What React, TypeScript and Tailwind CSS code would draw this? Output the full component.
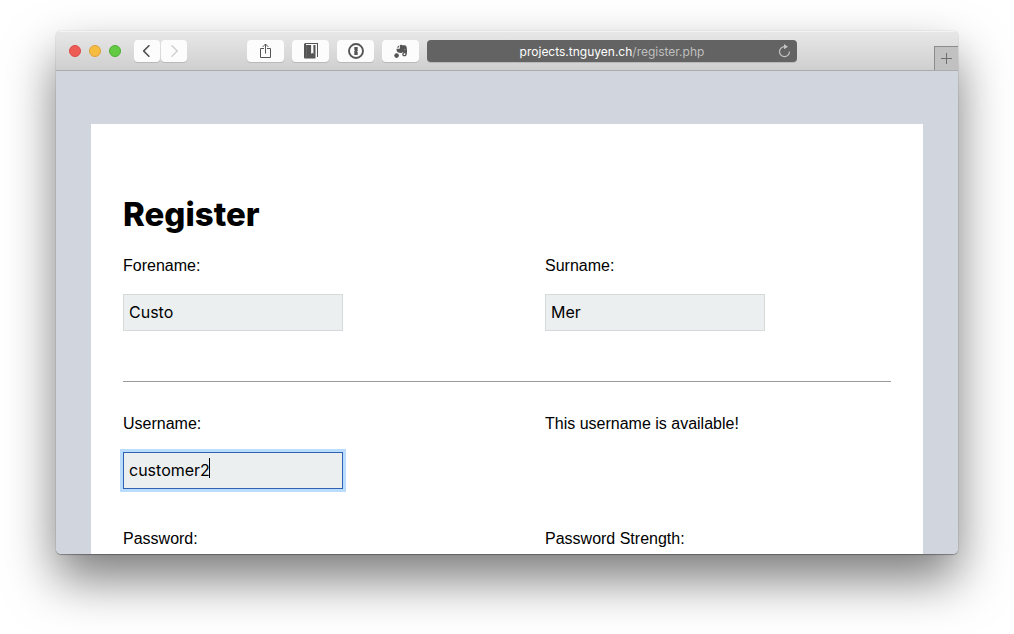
import type { ReactNode } from "react";

const fieldClass =
  "mt-4 block h-[37px] w-[220px] max-w-full border px-[5px] pb-0.5 font-['Inter',sans-serif] text-base text-black outline-none bg-[#ebeff0]";

function Field({ id, label, value }: { id: string; label: string; value: string }) {
  return (
    <div>
      <label htmlFor={id} className="block">
        {label}
      </label>
      <input id={id} type="text" defaultValue={value} className={`${fieldClass} border-[#d5d9d9]`} />
    </div>
  );
}

function ToolButton({ label, children }: { label: string; children: ReactNode }) {
  return (
    <button
      type="button"
      aria-label={label}
      className="flex h-[22px] w-[37px] items-center justify-center rounded bg-[#fcfcfc] text-[#555] shadow-[0_1px_0_#b9b9b9]"
    >
      {children}
    </button>
  );
}

function Toolbar() {
  return (
    <header className="flex h-10 shrink-0 items-start border-b border-[#acacac] bg-linear-to-b from-[#e8e8e8] to-[#cfcfcf] pl-[13px] pt-[9px] shadow-[inset_0_1px_0_#f4f4f4]">
      <div className="flex h-[22px] items-center gap-2">
        <button type="button" aria-label="Close" className="size-3 rounded-full border border-[#dd4a45] bg-[#ee5c56]" />
        <button type="button" aria-label="Minimize" className="size-3 rounded-full border border-[#dfa037] bg-[#f6bd41]" />
        <button type="button" aria-label="Zoom" className="size-3 rounded-full border border-[#4eae33] bg-[#62ca43]" />
      </div>

      <nav className="ml-[13px] flex gap-px">
        <button
          type="button"
          aria-label="Back"
          className="flex h-[22px] w-[26px] items-center justify-center rounded bg-[#fcfcfc] shadow-[0_1px_0_#b9b9b9]"
        >
          <svg width="8" height="12" viewBox="0 0 8 12" fill="none" stroke="#505050" strokeWidth="1.6">
            <path d="M6.400 0.300 0.700 6l5.700 5.700" />
          </svg>
        </button>
        <button
          type="button"
          aria-label="Forward"
          className="flex h-[22px] w-[26px] items-center justify-center rounded bg-[#fcfcfc] shadow-[0_1px_0_#b9b9b9]"
        >
          <svg width="8" height="12" viewBox="0 0 8 12" fill="none" stroke="#cfcfcf" strokeWidth="1.4">
            <path d="M1.500.3 7.200 6l-5.700 5.700" />
          </svg>
        </button>
      </nav>

      <div className="ml-[60px] flex gap-2">
        <ToolButton label="Share">
          <svg width="12" height="16" viewBox="0 0 12 16" fill="none" stroke="currentColor">
            <path d="M4 5.500H.5v9h10v-9H7M5.500 10.500V1M2.700 3.900l2.800-2.900 2.800 2.900" />
          </svg>
        </ToolButton>
        <ToolButton label="Reading list">
          <svg width="14" height="16" viewBox="0 0 14 16" fill="currentColor">
            <path d="M1.500 0H14v14h-1V1H2v1h9.500v13.500H1A1 1 0 0 1 0 14.500V1.500Q0 0 1.500 0Z" />
            <path d="M7.100 2h2.300v9L8.250 9.800 7.100 11Z" fill="#fcfcfc" />
            <path d="M2.500 2v13.500" stroke="#777" strokeWidth=".5" />
          </svg>
        </ToolButton>
        <ToolButton label="Password manager">
          <svg width="16" height="16" viewBox="0 0 16 16" fill="currentColor">
            <circle cx="8" cy="8" r="7" fill="none" stroke="currentColor" strokeWidth="1.9" />
            <path d="M6.300 3.900h3.400v4L9 8.600l.7.700v2.800H6.300v-4l.7-.7-.7-.7Z" />
          </svg>
        </ToolButton>
        <ToolButton label="Web clipper">
          <svg width="14" height="14" viewBox="0 0 14 14" fill="currentColor">
            <circle cx="2.600" cy="11.600" r="2.300" />
            <path d="M5.200 1.200v2.300H2.700Z" />
            <path d="M6 1.200c1.200-.8 2.400-.5 2.900.2 1.200-.1 2.700 0 3.200.6.900 1.300 1.100 4.700.8 7.400-.2 2-1 2.800-2.500 2.800-1.500 0-2.200-.7-2.200-1.800 0-1.300.8-1.900 2.200-1.700v1.100c-.7-.1-1 .2-.9.700.1.500.6.600 1.200.5.700-.2.800-1.100.6-1.800-1-.1-1.900-.4-2.300-1.100-.5.800-1.300 1-2.200.9-1.800-.1-3-.4-3.600-1.200-.5-.9-.8-2-.7-3.100h2.700c.6 0 .8-.3.800-.9Z" />
            <path d="M10.100 5.800c.2-.8 1.300-.8 1.500.3-.5-.2-1-.3-1.500-.3Z" fill="#fcfcfc" />
          </svg>
        </ToolButton>
      </div>

      <div className="ml-2 mr-[137px] flex h-[22px] min-w-0 flex-1 items-center rounded bg-[#636363] pl-[19px] pr-[6px] shadow-[0_1px_0_#b9b9b9]">
        <p className="flex-1 truncate pt-px text-center font-['Inter',sans-serif] text-[12px] leading-5 text-white">
          projects.tnguyen.ch<span className="text-[#bfbfbf]">/register.php</span>
        </p>
        <button type="button" aria-label="Reload" className="shrink-0 text-[#c4c4c4]">
          <svg width="13" height="14" viewBox="0 0 13 14" fill="none" stroke="currentColor" strokeWidth="1.2">
            <path d="M6.500 2.600A5 5 0 1 0 11.500 7.600" />
            <path d="M6 0l4 2.700L6 5.200Z" fill="currentColor" stroke="none" />
          </svg>
        </button>
      </div>

      <button
        type="button"
        aria-label="New tab"
        className="flex h-6 w-6 shrink-0 items-center justify-center self-end border-l border-t border-[#8c8c8c] bg-[#c1c1c1]"
      >
        <svg width="11" height="11" viewBox="0 0 11 11" stroke="#6e6e6e">
          <path d="M5.500 0v11M0 5.500h11" />
        </svg>
      </button>
    </header>
  );
}

export default function App() {
  return (
    <div className="flex h-screen flex-col overflow-hidden bg-white px-14 pb-20 pt-[31px] font-['Liberation_Sans',Arial,sans-serif]">
      <div className="flex min-h-0 flex-1 flex-col overflow-hidden rounded-[5px] shadow-[0_1px_1px_rgba(0,0,0,0.3),0_0_1px_rgba(0,0,0,0.4),0_25px_50px_rgba(0,0,0,0.52)]">
        <Toolbar />
        <main className="min-h-0 flex-1 overflow-hidden bg-[#d1d5dd] px-[35px] pt-[53px]">
          <form className="bg-white px-8 pb-16 pt-[70px] text-base leading-6 text-black">
            <h1 className="font-['Inter',sans-serif] text-[33px] font-extrabold leading-10">Register</h1>

            <div className="mt-5 grid grid-cols-2 gap-x-[76px]">
              <Field id="forename" label="Forename:" value="Custo" />
              <Field id="surname" label="Surname:" value="Mer" />
            </div>

            <hr className="mt-[50px] border-t border-[#999]" />

            <div className="mt-[30px] grid grid-cols-2 gap-x-[76px]">
              <div>
                <label htmlFor="username" className="block">
                  Username:
                </label>
                <div className="relative w-fit">
                  <input
                    id="username"
                    type="text"
                    defaultValue="customer2"
                    className={`${fieldClass} border-[#2f62b0] caret-transparent shadow-[0_0_0_3px_#b9dcff]`}
                  />
                  <span aria-hidden="true" className="absolute left-[86px] top-1.5 h-5 w-px bg-black" />
                </div>
              </div>
              <output htmlFor="username">This username is available!</output>
            </div>

            <div className="mt-[38px] grid grid-cols-2 gap-x-[76px]">
              <Field id="password" label="Password:" value="" />
              <p>Password Strength:</p>
            </div>
          </form>
        </main>
      </div>
    </div>
  );
}
